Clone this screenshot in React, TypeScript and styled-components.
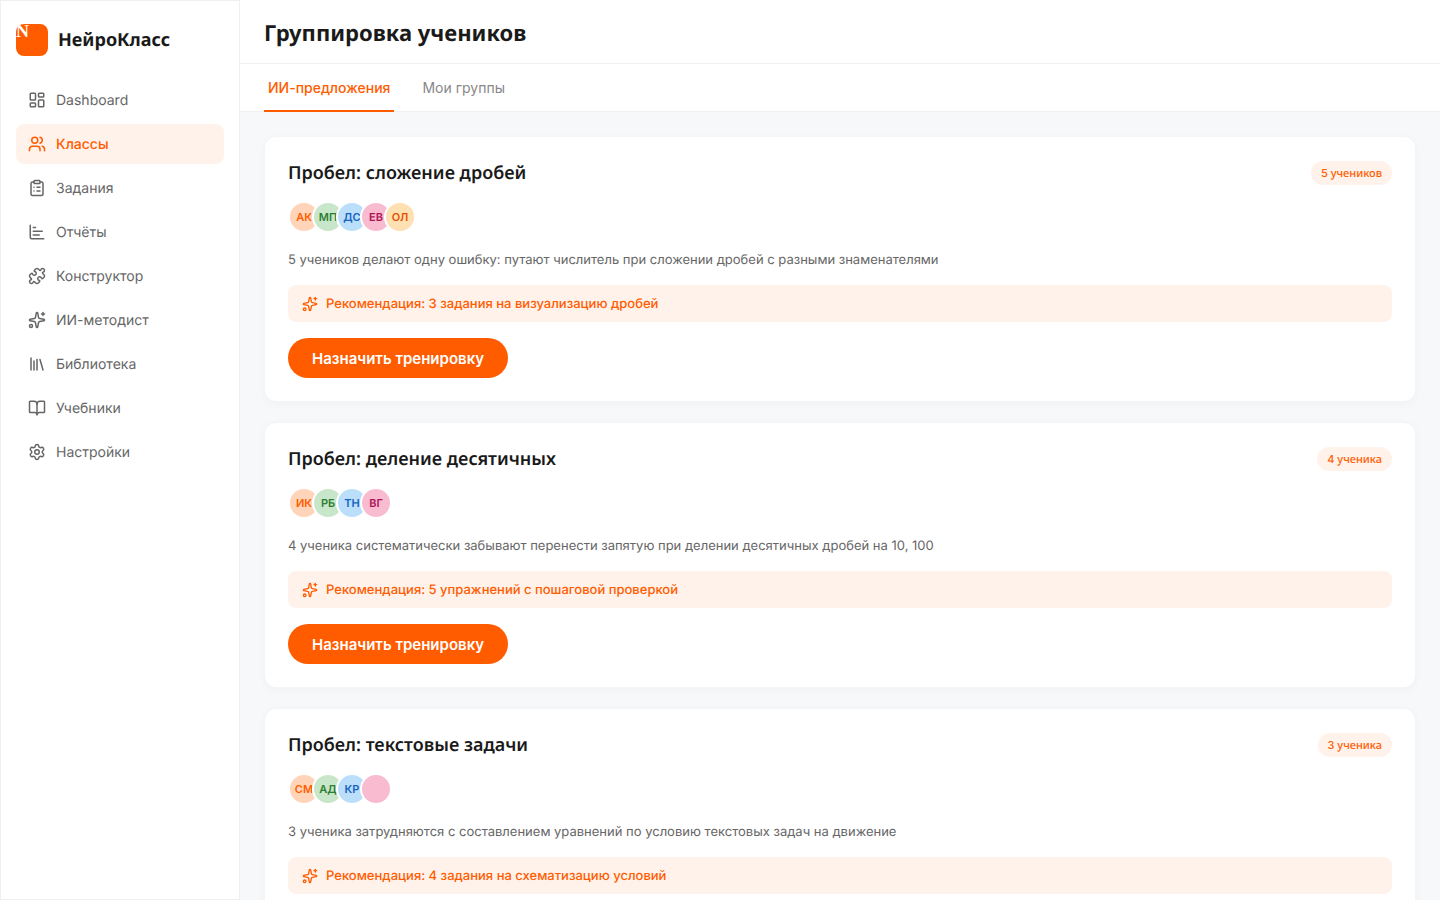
import React, { useState } from 'react';
import styled, { createGlobalStyle, css } from 'styled-components';
import {
  BookOpen,
  ChartBar,
  ClipboardList,
  LayoutDashboard,
  Library,
  Puzzle,
  Settings,
  Sparkles,
  Users,
  type LucideIcon,
} from 'lucide-react';

const color = {
  accent: '#ff5c00',
  accentSoft: '#fff2eb',
  ink: '#1a1a1a',
  muted: '#666666',
  faint: '#888888',
  line: '#f0f0f0',
  canvas: '#f6f8fa',
  surface: '#ffffff',
};

const heading = `'Noto Sans', sans-serif`;
const body = `Inter, sans-serif`;

const GlobalStyle = createGlobalStyle`
  *, *::before, *::after { box-sizing: border-box; }
  body {
    margin: 0;
    background: ${color.canvas};
    color: ${color.ink};
    font-family: ${body};
    text-rendering: geometricPrecision;
  }
  h1, h2, p, ul { margin: 0; }
  ul { padding: 0; list-style: none; }
  button { font: inherit; border: 0; cursor: pointer; }
`;

const Shell = styled.div`
  display: flex;
  height: 100vh;
`;

const Sidebar = styled.aside`
  flex: 0 0 240px;
  display: flex;
  flex-direction: column;
  gap: 24px;
  padding: 23px 15px;
  background: ${color.surface};
  border: 1px solid ${color.line};
`;

const Brand = styled.a`
  display: flex;
  align-items: center;
  gap: 10px;
  color: inherit;
  text-decoration: none;
`;

const BrandMark = styled.span`
  width: 32px;
  height: 32px;
  border-radius: 8px;
  background: ${color.accent};
  color: #ffffff;
  font: 700 18px/14px 'Liberation Serif', serif;
`;

const BrandName = styled.span`
  font: 700 18px/24px ${heading};
`;

const NavList = styled.ul`
  display: flex;
  flex-direction: column;
  gap: 4px;
`;

const NavLink = styled.a<{ $active: boolean }>`
  display: flex;
  align-items: center;
  gap: 10px;
  height: 40px;
  padding: 0 12px;
  border-radius: 8px;
  color: ${color.muted};
  font-size: 14px;
  line-height: 21px;
  text-decoration: none;

  ${({ $active }) =>
    $active &&
    css`
      background: ${color.accentSoft};
      color: ${color.accent};
      font-weight: 500;
    `}
`;

const Main = styled.main`
  flex: 1;
  min-width: 0;
  display: flex;
  flex-direction: column;
`;

const TopBar = styled.header`
  flex: none;
  display: flex;
  align-items: center;
  height: 64px;
  padding: 2px 24px 0;
  background: ${color.surface};
  border-bottom: 1px solid ${color.line};
`;

const PageTitle = styled.h1`
  font: 700 22px/30px ${heading};
`;

const Tabs = styled.div`
  flex: none;
  display: flex;
  gap: 24px;
  height: 48px;
  padding: 0 24px;
  background: ${color.surface};
  box-shadow: inset 0 -1px ${color.line};
`;

const Tab = styled.button<{ $active: boolean }>`
  padding: 0 4px;
  background: transparent;
  border-bottom: 2px solid ${({ $active }) => ($active ? color.accent : 'transparent')};
  color: ${({ $active }) => ($active ? color.accent : color.faint)};
  font-size: 14px;
  font-weight: ${({ $active }) => ($active ? 500 : 400)};
`;

const CardList = styled.section`
  flex: 1;
  min-height: 0;
  overflow-y: auto;
  scrollbar-width: none;
  display: flex;
  flex-direction: column;
  gap: 20px;
  padding: 24px;
`;

const Card = styled.article`
  flex: none;
  display: flex;
  flex-direction: column;
  align-items: flex-start;
  gap: 16px;
  padding: 23px;
  background: ${color.surface};
  border: 1px solid #f4f5f7;
  border-radius: 12px;
  box-shadow: 0 2px 8px rgba(0, 0, 0, 0.03);
`;

const CardHeader = styled.div`
  align-self: stretch;
  display: flex;
  align-items: flex-end;
  justify-content: space-between;
  height: 25px;
`;

const CardTitle = styled.h2`
  font: 600 18px/24px ${heading};
`;

const CountBadge = styled.span`
  height: 24px;
  padding: 4px 10px;
  border-radius: 12px;
  background: ${color.accentSoft};
  color: ${color.accent};
  font: 500 11px/16px Inter, 'Noto Sans', sans-serif;
`;

const CountWord = styled.span`
  font-family: ${heading};
`;

const Avatars = styled.ul`
  display: flex;
`;

const avatarTones = [
  { background: '#ffd4b8', color: '#ff5c00' },
  { background: '#c8e6c9', color: '#2e7d32' },
  { background: '#bbdefb', color: '#1565c0' },
  { background: '#f8bbd0', color: '#ad1457' },
  { background: '#ffe0b2', color: '#e65100' },
];

const Avatar = styled.li<{ $tone: number }>`
  display: flex;
  align-items: center;
  justify-content: center;
  width: 32px;
  height: 32px;
  border: 2px solid #ffffff;
  border-radius: 50%;
  background: ${({ $tone }) => avatarTones[$tone].background};
  color: ${({ $tone }) => avatarTones[$tone].color};
  font-size: 11px;
  font-weight: 600;

  & + & { margin-left: -8px; }
`;

const Summary = styled.p`
  height: 20px;
  color: ${color.muted};
  font-size: 13px;
  line-height: 22px;
`;

const Advice = styled.p`
  align-self: stretch;
  display: flex;
  align-items: center;
  gap: 8px;
  padding: 9px 14px 8px;
  border-radius: 8px;
  background: ${color.accentSoft};
  color: ${color.accent};
  font-size: 13px;
  font-weight: 500;
  line-height: 20px;
`;

const AssignButton = styled.button`
  height: 40px;
  padding: 0 24px;
  border-radius: 20px;
  background: ${color.accent};
  color: #ffffff;
  font-size: 15px;
  font-weight: 600;
`;

const navItems: { label: string; icon: LucideIcon }[] = [
  { label: 'Dashboard', icon: LayoutDashboard },
  { label: 'Классы', icon: Users },
  { label: 'Задания', icon: ClipboardList },
  { label: 'Отчёты', icon: ChartBar },
  { label: 'Конструктор', icon: Puzzle },
  { label: 'ИИ-методист', icon: Sparkles },
  { label: 'Библиотека', icon: Library },
  { label: 'Учебники', icon: BookOpen },
  { label: 'Настройки', icon: Settings },
];

const tabs = ['ИИ-предложения', 'Мои группы'];

const groups = [
  {
    title: 'Пробел: сложение дробей',
    count: 5,
    word: 'учеников',
    initials: ['АК', 'МП', 'ДС', 'ЕВ', 'ОЛ'],
    summary: '5 учеников делают одну ошибку: путают числитель при сложении дробей с разными знаменателями',
    advice: 'Рекомендация: 3 задания на визуализацию дробей',
  },
  {
    title: 'Пробел: деление десятичных',
    count: 4,
    word: 'ученика',
    initials: ['ИК', 'РБ', 'ТН', 'ВГ'],
    summary: '4 ученика систематически забывают перенести запятую при делении десятичных дробей на 10, 100',
    advice: 'Рекомендация: 5 упражнений с пошаговой проверкой',
  },
  {
    title: 'Пробел: текстовые задачи',
    count: 3,
    word: 'ученика',
    initials: ['СМ', 'АД', 'КР', ''],
    summary: '3 ученика затрудняются с составлением уравнений по условию текстовых задач на движение',
    advice: 'Рекомендация: 4 задания на схематизацию условий',
  },
];

export default function App() {
  const [activeTab, setActiveTab] = useState(0);

  return (
    <>
      <GlobalStyle />
      <Shell>
        <Sidebar>
          <Brand href="#">
            <BrandMark>N</BrandMark>
            <BrandName>НейроКласс</BrandName>
          </Brand>
          <nav>
            <NavList>
              {navItems.map(({ label, icon: Icon }) => (
                <li key={label}>
                  <NavLink href="#" $active={label === 'Классы'}>
                    <Icon size={18} />
                    {label}
                  </NavLink>
                </li>
              ))}
            </NavList>
          </nav>
        </Sidebar>
        <Main>
          <TopBar>
            <PageTitle>Группировка учеников</PageTitle>
          </TopBar>
          <Tabs role="tablist">
            {tabs.map((label, i) => (
              <Tab
                key={label}
                type="button"
                role="tab"
                aria-selected={i === activeTab}
                $active={i === activeTab}
                onClick={() => setActiveTab(i)}
              >
                {label}
              </Tab>
            ))}
          </Tabs>
          <CardList>
            {groups.map((group) => (
              <Card key={group.title}>
                <CardHeader>
                  <CardTitle>{group.title}</CardTitle>
                  <CountBadge>
                    {group.count} <CountWord>{group.word}</CountWord>
                  </CountBadge>
                </CardHeader>
                <Avatars>
                  {group.initials.map((initials, i) => (
                    <Avatar key={i} $tone={i}>
                      {initials}
                    </Avatar>
                  ))}
                </Avatars>
                <Summary>{group.summary}</Summary>
                <Advice>
                  <Sparkles size={16} />
                  {group.advice}
                </Advice>
                <AssignButton type="button">Назначить тренировку</AssignButton>
              </Card>
            ))}
          </CardList>
        </Main>
      </Shell>
    </>
  );
}
